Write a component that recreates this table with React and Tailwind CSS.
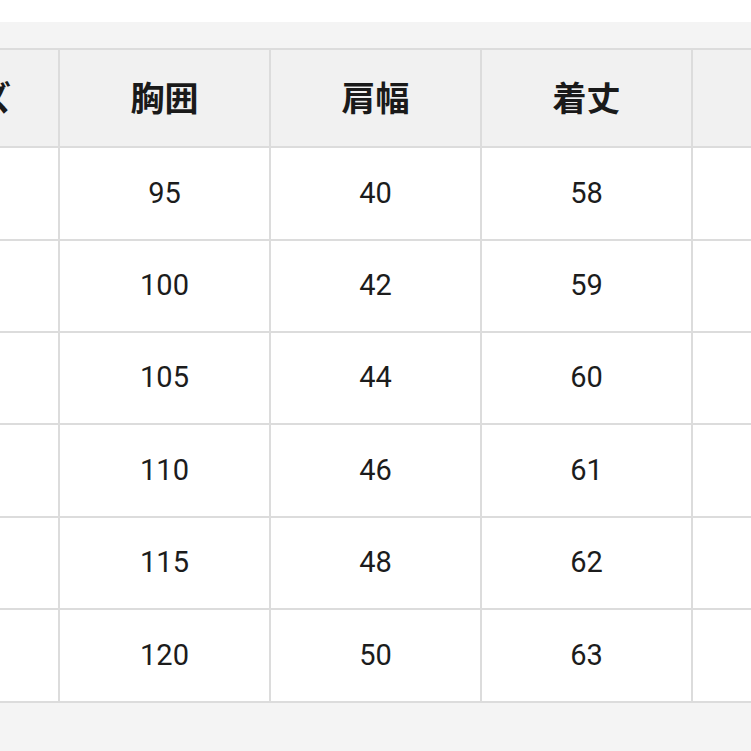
import React from "react";

const headers = ["サイズ", "胸囲", "肩幅", "着丈", ""];
const rows = [
  ["", "95", "40", "58", ""],
  ["", "100", "42", "59", ""],
  ["", "105", "44", "60", ""],
  ["", "110", "46", "61", ""],
  ["", "115", "48", "62", ""],
  ["", "120", "50", "63", ""],
];
const rowH = ["h-[91px]", "h-[90px]", "h-[90px]", "h-[91px]", "h-[90px]", "h-[91px]"];

export default function App() {
  return (
    <div className="w-[751px] h-[751px] overflow-hidden bg-white flex flex-col">
      <div className="h-[22px] bg-white shrink-0" />
      <div className="h-[26px] bg-[#f4f4f4] shrink-0" />
      <div className="w-[751px] overflow-hidden shrink-0">
        <div className="ml-[-151px] w-[1055px] border-t-2 border-[#dcdcdc]">
          <div className="flex border-b-2 border-[#dcdcdc] bg-[#f1f1f1]">
            {headers.map((h, i) => (
              <div
                key={i}
                className={
                  "w-[211px] h-[96px] shrink-0 border-r-2 border-[#dcdcdc] flex items-center justify-center pb-[4px] text-[34px] font-bold text-[#1a1a1a] [font-family:'Noto_Sans_CJK_JP',sans-serif] " +
                  (i === 0 ? "pl-[14px]" : "")
                }
              >
                {h}
              </div>
            ))}
          </div>
          {rows.map((r, ri) => (
            <div key={ri} className="flex border-b-2 border-[#dcdcdc] bg-white">
              {r.map((c, ci) => (
                <div
                  key={ci}
                  className={
                    "w-[211px] shrink-0 border-r-2 border-[#dcdcdc] flex items-center justify-center text-[29px] text-[#1c1c1c] [font-family:Roboto,sans-serif] " +
                    rowH[ri]
                  }
                >
                  {c}
                </div>
              ))}
            </div>
          ))}
        </div>
      </div>
      <div className="flex-1 bg-[#f4f4f4]" />
    </div>
  );
}
